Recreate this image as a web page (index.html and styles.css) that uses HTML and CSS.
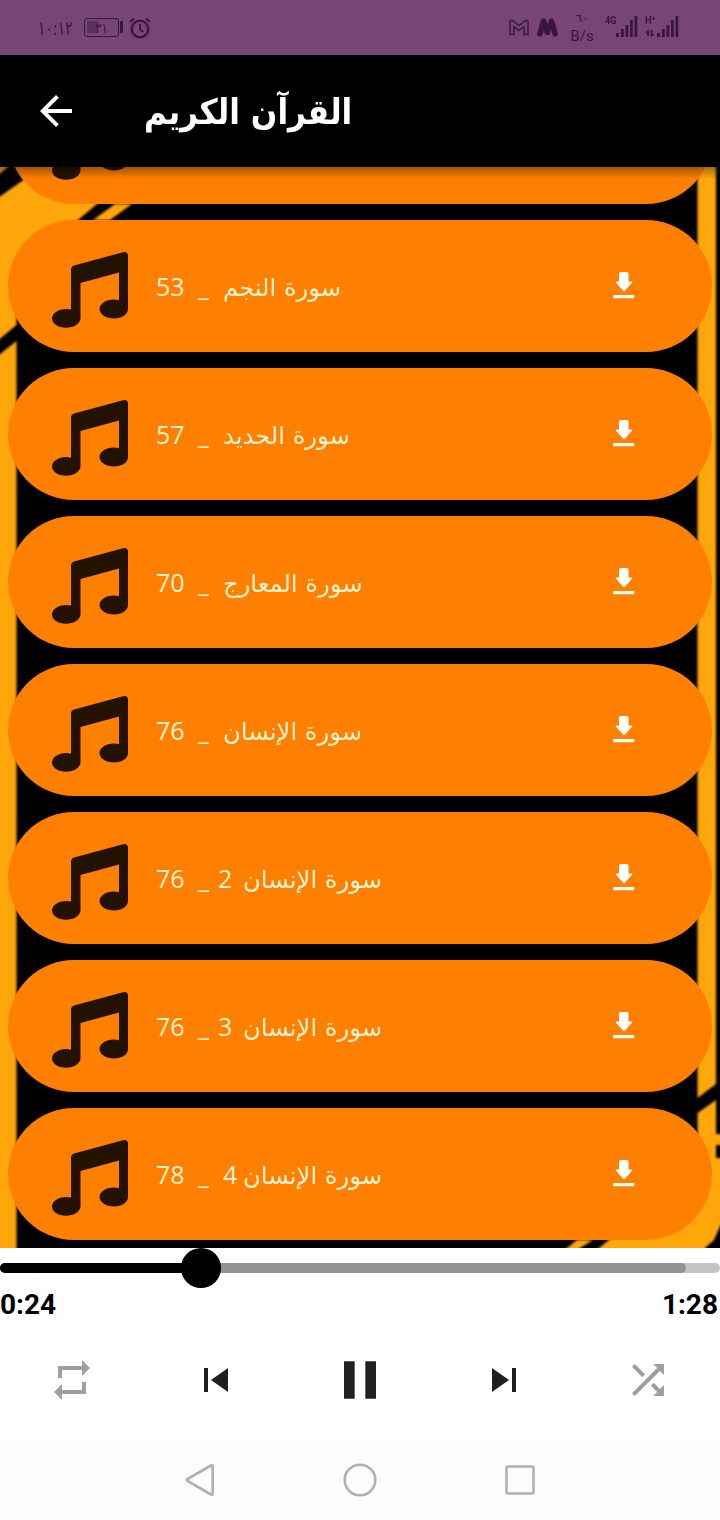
FILE: index.html
```
<!DOCTYPE html>
<html lang="ar">
<head>
<meta charset="utf-8">
<title>القرآن الكريم</title>
<link rel="stylesheet" href="styles.css">
</head>
<body>
<svg class="defs" width="0" height="0">
  <symbol id="note" viewBox="0 0 76 76"><path d="M19 17.500Q19 14.500 22 13.500L71 .2Q76-.8 76 4V57C76 62.500 70 66.500 62 66.500S47.500 62.300 47.500 57 54 47.500 62 47.500Q65 47.500 67 48.300V20.500L28.500 31V66C28.500 71.500 22 75.800 14 75.800S0 71.500 0 66.500 6 57 14 57Q17 57 19 57.800Z"/></symbol>
  <symbol id="download" viewBox="0 0 22 27"><path d="M7.500 0H14Q15.500 0 15.500 1.500V9.500H18.500Q20 9.500 19 10.700L12 18.500Q11 19.600 10 18.500L3 10.700Q2 9.500 3.500 9.500H6V1.500Q6 0 7.500 0Z"/><rect x="0" y="23" width="21.500" height="3.200" rx="1.400"/></symbol>
</svg>
<div class="screen">
  <header class="status">
    <span class="clock"><span class="digits">١٠:١٢</span></span>
    <span class="battery"><i class="charge"></i><span class="pct">٣١</span></span>
    <svg class="alarm" width="22" height="22" viewBox="0 0 22 22" fill="none" stroke="currentColor"><circle cx="11" cy="12" r="8.300" stroke-width="2.300"/><path d="M11 7V12.500L14.500 15M1 5L5 1.500M21 5L17 1.500" stroke-width="2"/></svg>
    <span class="spacer"></span>
    <svg class="gmail" width="20" height="17" viewBox="0 0 20 16" fill="none" stroke="currentColor" stroke-width="1.500"><path d="M1 15V2Q2 0 4 1.500L10 6 16 1.500Q18 0 19 2V15H15V7L10 11 5 7V15Z"/></svg>
    <svg class="mark" width="21" height="19" viewBox="0 0 21 19" fill="none" stroke="currentColor" stroke-width="5.500" stroke-linejoin="round" stroke-linecap="round"><path d="M2.800 16L6.500 3 10.500 14.500 14.500 3 18.200 16"/></svg>
    <span class="rate"><span class="rate-num">٦٠</span><span>B/s</span></span>
    <span class="net"><b>4G</b><svg width="22" height="21" viewBox="0 0 22 21"><path d="M0 17h3v4H0zM5 13h2.800v8H5zM9.500 9h2.800v12H9.500zM14 4h2.800v17H14zM18.500 0h2.800v21h-2.800z"/></svg></span>
    <span class="net two"><b>H⁺</b><svg width="34" height="21" viewBox="0 0 34 21"><path d="M12 17h3v4h-3zM17 13h2.800v8H17zM21.500 9h2.800v12h-2.800zM26 4h2.800v17H26zM30.500 0h2.800v21h-2.800zM0 17L4 13V20H2V17ZM5.500 14H7.500V18H10L5.500 21Z"/></svg></span>
  </header>
  <div class="appbar">
    <svg class="back" width="48" height="48" viewBox="0 0 24 24"><path d="M20 11H7.830l5.590-5.590L12 4l-8 8 8 8 1.410-1.410L7.830 13H20v-2z"/></svg>
    <h1 dir="rtl">القرآن الكريم</h1>
  </div>
  <main class="list">
    <svg class="art" width="720" height="1081" viewBox="0 167 720 1081">
      <g class="amber">
        <path d="M-5 160H17L-5 177ZM-5 200L22 181 60 160H140L97 204 78 220 16.500 270V325L-5 343ZM115 204H132L110 220H93ZM-5 358L16.500 341V1260H-5ZM697.500 150H716V1084L697.500 1098ZM697.500 1113L716 1100V1134H725V1145H716V1158H725V1215L714 1240 705 1248V1260H584L609 1240 698 1200ZM567 1248L577 1240H593L580 1248 565 1260H552Z"/>
      </g>
    </svg>
    <div class="cards">
      <article class="card"><svg class="note"><use href="#note"/></svg></article>
      <article class="card"><svg class="note"><use href="#note"/></svg><div class="label"><span class="num">53</span><span class="dash">_</span><span class="name" dir="rtl">سورة النجم</span></div><svg class="download"><use href="#download"/></svg></article>
      <article class="card"><svg class="note"><use href="#note"/></svg><div class="label"><span class="num">57</span><span class="dash">_</span><span class="name" dir="rtl">سورة الحديد</span></div><svg class="download"><use href="#download"/></svg></article>
      <article class="card"><svg class="note"><use href="#note"/></svg><div class="label"><span class="num">70</span><span class="dash">_</span><span class="name" dir="rtl">سورة المعارج</span></div><svg class="download"><use href="#download"/></svg></article>
      <article class="card"><svg class="note"><use href="#note"/></svg><div class="label"><span class="num">76</span><span class="dash">_</span><span class="name" dir="rtl">سورة الإنسان</span></div><svg class="download"><use href="#download"/></svg></article>
      <article class="card"><svg class="note"><use href="#note"/></svg><div class="label"><span class="num">76</span><span class="dash">_</span><span class="part">2</span><span class="name" dir="rtl">سورة الإنسان</span></div><svg class="download"><use href="#download"/></svg></article>
      <article class="card"><svg class="note"><use href="#note"/></svg><div class="label"><span class="num">76</span><span class="dash">_</span><span class="part">3</span><span class="name" dir="rtl">سورة الإنسان</span></div><svg class="download"><use href="#download"/></svg></article>
      <article class="card"><svg class="note"><use href="#note"/></svg><div class="label"><span class="num">78</span><span class="dash">_</span><span class="part near">4</span><span class="name" dir="rtl">سورة الإنسان</span></div><svg class="download"><use href="#download"/></svg></article>
    </div>
    <div class="shade"></div>
  </main>
  <section class="player">
    <div class="track"><div class="buffered"></div><div class="played"></div><div class="thumb"></div></div>
    <div class="times"><span>0:24</span><span>1:28</span></div>
    <div class="controls">
      <svg class="off" width="48" height="48" viewBox="0 0 24 24"><path d="M7 7h10v3l4-4-4-4v3H5v6h2V7zm10 10H7v-3l-4 4 4 4v-3h12v-6h-2v4z"/></svg>
      <svg width="48" height="48" viewBox="0 0 24 24"><path d="M6 6h2v12H6zm3.500 6l8.500 6V6z"/></svg>
      <svg width="64" height="64" viewBox="0 0 24 24"><path d="M6 19h4V5H6v14zm8-14v14h4V5h-4z"/></svg>
      <svg width="48" height="48" viewBox="0 0 24 24"><path d="M6 18l8.500-6L6 6v12zM16 6v12h2V6h-2z"/></svg>
      <svg class="off" width="48" height="48" viewBox="0 0 24 24"><path d="M10.590 9.170L5.410 4 4 5.410l5.170 5.170 1.420-1.410zM14.500 4l2.040 2.040L4 18.590 5.410 20 17.960 7.460 20 9.500V4h-5.500zm.330 9.410l-1.410 1.410 3.130 3.130L14.500 20H20v-5.500l-2.040 2.040-3.130-3.130z"/></svg>
    </div>
  </section>
  <nav class="nav">
    <svg width="36" height="36" viewBox="0 0 36 36"><path d="M5.500 17L29 3.500Q30.700 2.800 30.700 4.500V31.500Q30.700 33.200 29 32.500L5.500 19Q4 18 5.500 17Z"/></svg>
    <svg width="36" height="36" viewBox="0 0 36 36"><circle cx="18" cy="18" r="15.300"/></svg>
    <svg width="36" height="36" viewBox="0 0 36 36"><rect x="4.500" y="4.500" width="27" height="27" rx="1.500"/></svg>
  </nav>
</div>
</body>
</html>
```
FILE: styles.css
```
* { box-sizing: border-box; }
body { margin: 0; background: #fff; }
svg { display: block; flex: none; }
.defs { position: absolute; }
.screen { width: 720px; height: 1520px; display: flex; flex-direction: column; overflow: hidden; font-family: "DejaVu Sans", sans-serif; }

.status { height: 55px; background: #774576; color: #3b1640; display: flex; align-items: center; padding: 0 41px 0 38px; }
.clock { width: 46px; font-size: 20px; white-space: nowrap; direction: ltr; }
.digits { display: inline-block; transform: scaleX(.7); transform-origin: left; }
.battery { width: 35px; height: 19px; border: 1.500px solid currentColor; border-radius: 3px; position: relative; display: flex; justify-content: center; align-items: center; font-size: 14px; }
.battery::after { content: ""; position: absolute; left: 35px; top: 2px; width: 3px; height: 12px; background: currentColor; border-radius: 1px; }
.charge { position: absolute; left: 2px; top: 2px; width: 11px; height: 12px; background: #5c2f60; }
.pct { position: relative; transform: scaleX(.85); }
.alarm { margin-left: 10px; }
.spacer { flex: 1; }
.mark { margin-left: 8px; }
.rate { width: 26px; margin-left: 11px; display: flex; flex-direction: column; align-items: center; font: 15px/19px Roboto, sans-serif; }
.rate-num { font: 12px/17px "DejaVu Sans", sans-serif; }
.net { width: 33px; height: 21px; margin-left: 10px; display: flex; justify-content: flex-end; position: relative; top: -1px; fill: currentColor; }
.net b { position: absolute; left: 0; top: -1px; font: bold 11px/11px Roboto, sans-serif; transform: scaleX(.85); transform-origin: left; }
.net.two { width: 34px; margin-left: 7px; }

.appbar { height: 112px; background: #000; color: #fff; display: flex; align-items: center; padding-left: 32px; }
.back { fill: #fff; }
h1 { margin: 2px 0 0 64px; font-size: 35px; line-height: 48px; font-weight: bold; white-space: nowrap; transform: scaleX(.89); transform-origin: left; }

.list { height: 1081px; background: #000; position: relative; overflow: hidden; }
.art { position: absolute; inset: 0; }
.amber { fill: #ffa60a; filter: blur(.8px); }
.cards { position: relative; margin-top: -95px; padding: 0 8px; display: flex; flex-direction: column; gap: 16px; }
.card { height: 132px; flex: none; border-radius: 66px; background: #ff8000; display: flex; align-items: center; padding: 0 77px 0 44px; }
.note { width: 76px; height: 76px; margin-top: 7px; fill: #241200; }
.label { flex: 1; margin: 2px 0 0 28px; display: flex; align-items: baseline; color: #fff3cf; font-size: 24px; line-height: 36px; white-space: nowrap; }
.name { transform: scaleX(1.01); transform-origin: left; }
.num, .dash, .part { font-family: "Open Sans", sans-serif; font-size: 25px; }
.num { width: 42px; }
.dash { width: 25px; }
.part { width: 25px; margin-left: -5px; }
.part.near { width: 20px; margin-left: 0; }
.download { width: 22px; height: 27px; margin-top: -2px; fill: #fff; }
.shade { position: absolute; inset: 0 0 auto; height: 12px; background: linear-gradient(rgba(0,0,0,.35), rgba(0,0,0,0)); }

.player { height: 192px; background: #fff; }
.track { height: 40px; position: relative; }
.track::before, .buffered, .played { content: ""; position: absolute; left: 0; top: 15px; height: 10px; border-radius: 5px; }
.track::before { width: 720px; background: #c4c4c4; }
.buffered { width: 686px; background: #929292; }
.played { width: 201px; background: #000; }
.thumb { position: absolute; left: 181px; top: 0; width: 40px; height: 40px; border-radius: 50%; background: #000; }
.times { height: 32px; display: flex; justify-content: space-between; padding-right: 2px; font: bold 28px/33px Roboto, sans-serif; color: #000; }
.controls { height: 120px; display: grid; grid-template-columns: repeat(5, 1fr); place-items: center; fill: #212121; }
.off { fill: #9e9e9e; }

.nav { height: 80px; background: #fcfcfc; display: flex; justify-content: center; align-items: center; gap: 124px; fill: none; stroke: #b0b0b0; stroke-width: 2.600px; }
```
